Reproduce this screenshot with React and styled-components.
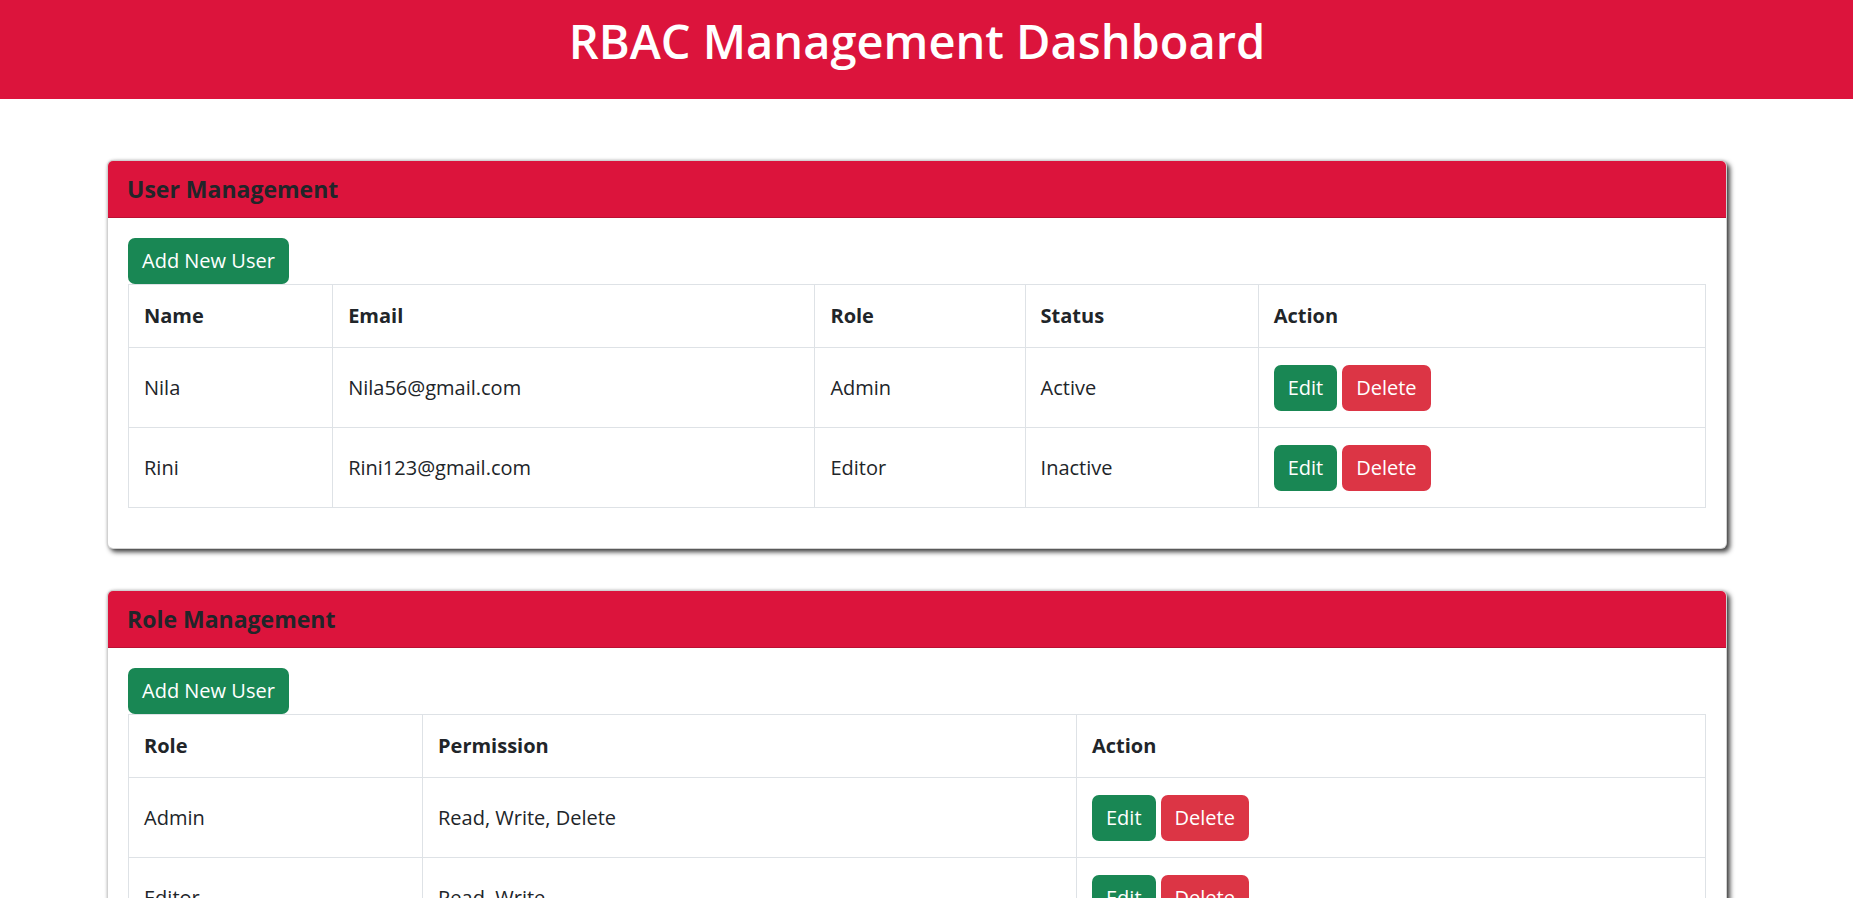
import React from 'react'
import styled, { createGlobalStyle } from 'styled-components'

const GlobalStyle = createGlobalStyle`
  html {
    scrollbar-width: none;
  }
  html::-webkit-scrollbar {
    display: none;
  }
  body {
    margin: 0;
    background: #fff;
    color: #212529;
    font-family: "Open Sans", "Noto Sans", sans-serif;
    font-size: 20px;
    line-height: 1.5;
  }
`

const TopBar = styled.header`
  height: 99px;
  box-sizing: border-box;
  padding: 11px 19px 0 0;
  background-color: #dc143c;
  text-align: center;
`

const Title = styled.h1`
  margin: 0;
  color: #fff;
  font-size: 47px;
  font-weight: 600;
  line-height: 60px;
`

const Main = styled.main`
  padding: 61px 126px 0 107px;
`

const Card = styled.section`
  margin-bottom: 41px;
  border: 1px solid rgba(0, 0, 0, 0.18);
  border-radius: 6px;
  background: #fff;
  box-shadow: 3px 3px 5px rgba(0, 0, 0, 0.75), 0 0 3px rgba(0, 0, 0, 0.15);
`

const CardHeader = styled.div`
  padding: 16px 19px;
  background-color: #dc143c;
  border-bottom: 1px solid rgba(0, 0, 0, 0.15);
  border-radius: 5px 5px 0 0;
`

const CardTitle = styled.h5`
  margin: 0;
  font-size: 23px;
  font-weight: 700;
  line-height: 24px;
  color: #212529;
`

const CardBody = styled.div`
  padding: 20px;
`

const Button = styled.button`
  font-family: inherit;
  font-size: 20px;
  line-height: 30px;
  padding: 7px 13px;
  border: 1px solid transparent;
  border-radius: 7px;
  color: #fff;
  background-color: ${p => (p.$variant === 'danger' ? '#dc3545' : '#198754')};
  cursor: pointer;
`

const Table = styled.table`
  width: 100%;
  table-layout: fixed;
  border-collapse: collapse;
  margin-bottom: 20px;
  border: 1px solid #dee2e6;
`

const Col = styled.col`
  width: ${p => p.$width}px;
`

const Th = styled.th`
  padding: 16px 15px;
  border: 1px solid #dee2e6;
  text-align: left;
  font-weight: 700;
  vertical-align: middle;
`

const Td = styled.td`
  padding: 16.5px 15px;
  border: 1px solid #dee2e6;
  vertical-align: middle;
`

const Actions = styled.div`
  display: flex;
  gap: 5px;
`

const users = [
  { name: 'Nila', email: 'Nila56@gmail.com', role: 'Admin', status: 'Active' },
  { name: 'Rini', email: 'Rini123@gmail.com', role: 'Editor', status: 'Inactive' },
]

const roles = [
  { role: 'Admin', permission: 'Read, Write, Delete' },
  { role: 'Editor', permission: 'Read, Write' },
  { role: 'Viewer', permission: 'Read' },
]

function RowActions() {
  return (
    <Actions>
      <Button>Edit</Button>
      <Button $variant="danger">Delete</Button>
    </Actions>
  )
}

function App() {
  return (
    <>
      <GlobalStyle />
      <TopBar>
        <Title>RBAC Management Dashboard</Title>
      </TopBar>
      <Main>
        <Card>
          <CardHeader>
            <CardTitle>User Management</CardTitle>
          </CardHeader>
          <CardBody>
            <Button>Add New User</Button>
            <Table>
              <colgroup>
                <Col $width={204} />
                <Col $width={482} />
                <Col $width={210} />
                <Col $width={233} />
                <Col $width={447} />
              </colgroup>
              <thead>
                <tr>
                  <Th>Name</Th>
                  <Th>Email</Th>
                  <Th>Role</Th>
                  <Th>Status</Th>
                  <Th>Action</Th>
                </tr>
              </thead>
              <tbody>
                {users.map(u => (
                  <tr key={u.email}>
                    <Td>{u.name}</Td>
                    <Td>{u.email}</Td>
                    <Td>{u.role}</Td>
                    <Td>{u.status}</Td>
                    <Td><RowActions /></Td>
                  </tr>
                ))}
              </tbody>
            </Table>
          </CardBody>
        </Card>

        <Card>
          <CardHeader>
            <CardTitle>Role Management</CardTitle>
          </CardHeader>
          <CardBody>
            <Button>Add New User</Button>
            <Table>
              <colgroup>
                <Col $width={294} />
                <Col $width={654} />
                <Col $width={629} />
              </colgroup>
              <thead>
                <tr>
                  <Th>Role</Th>
                  <Th>Permission</Th>
                  <Th>Action</Th>
                </tr>
              </thead>
              <tbody>
                {roles.map(r => (
                  <tr key={r.role}>
                    <Td>{r.role}</Td>
                    <Td>{r.permission}</Td>
                    <Td><RowActions /></Td>
                  </tr>
                ))}
              </tbody>
            </Table>
          </CardBody>
        </Card>
      </Main>
    </>
  )
}

export default App
